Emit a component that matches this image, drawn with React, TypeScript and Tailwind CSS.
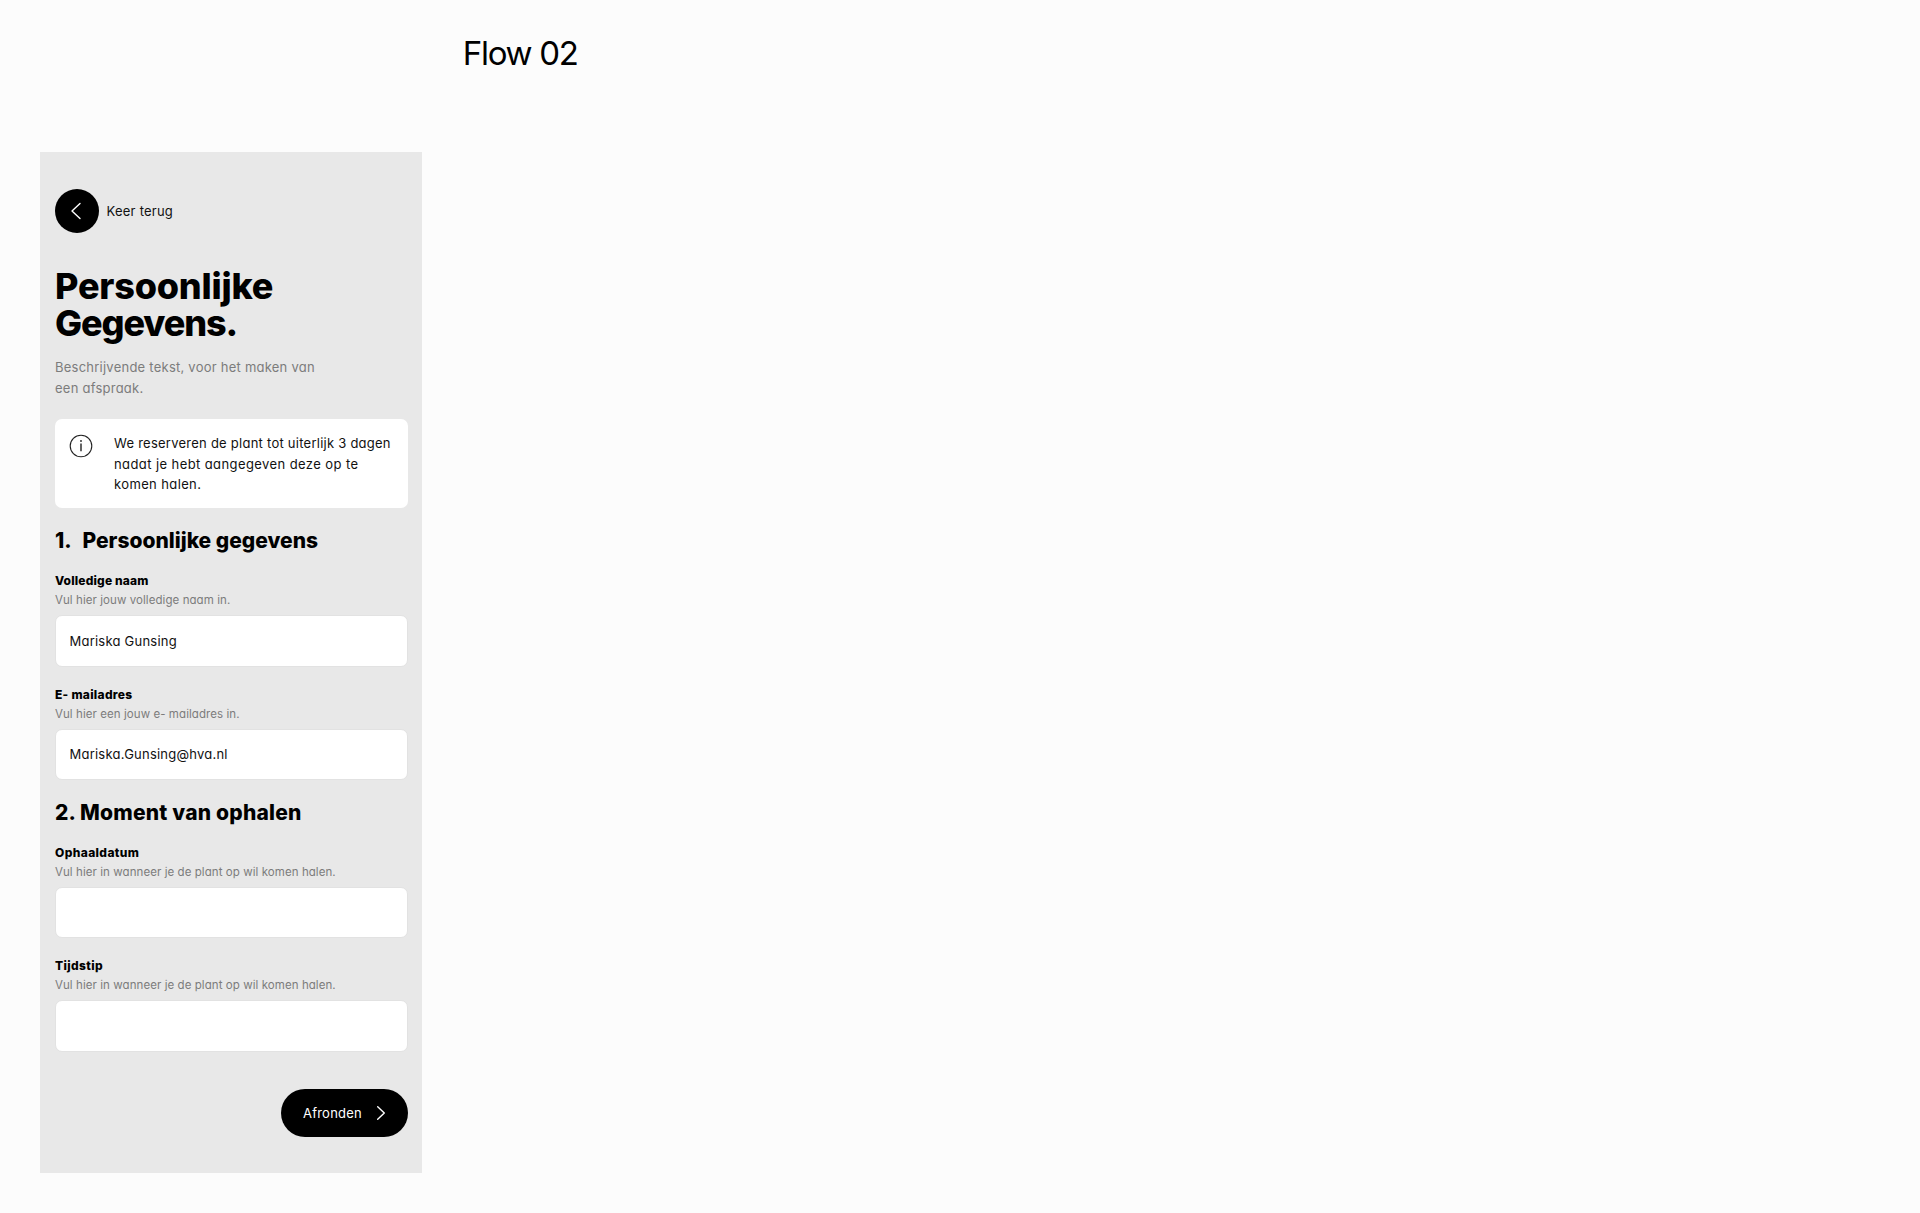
import type { ReactNode } from "react";

function Chevron({ className, points, box }: { className: string; points: string; box: string }) {
  return (
    <svg viewBox={box} className={className} fill="none" stroke="currentColor" strokeWidth="1.4" strokeLinecap="round" strokeLinejoin="round">
      <polyline points={points} />
    </svg>
  );
}

function SectionTitle({ children, className }: { children: ReactNode; className: string }) {
  return (
    <h2 className={`flex h-[28px] items-center whitespace-pre pt-[1.4px] text-[21px] leading-[28px] font-extrabold ${className}`}>
      {children}
    </h2>
  );
}

type FieldProps = { label: string; labelSpacing: string; hint: string; value?: string; className: string };

function Field({ label, labelSpacing, hint, value, className }: FieldProps) {
  return (
    <div className={className}>
      <div className={`h-[18px] text-[12px] leading-[18px] font-extrabold whitespace-nowrap ${labelSpacing}`}>{label}</div>
      <div className="mt-[2.3px] h-[17px] text-[11.5px] leading-[17px] tracking-[0.07px] whitespace-nowrap text-[#7c7c7c] [font-feature-settings:'cv11']">
        {hint}
      </div>
      <div className="mt-[6px] flex h-[51.5px] items-center rounded-[7px] border border-[#e2e2e2] bg-white pb-[1px] pl-[13.5px] text-[13px] leading-[20px] tracking-[0.23px] text-[#111] [font-feature-settings:'cv11']">
        {value}
      </div>
    </div>
  );
}

export default function App() {
  return (
    <div className="flex h-[1213px] w-[1920px] overflow-hidden bg-[#fcfcfc] pl-[40px] font-['Inter',sans-serif] text-black">
      <main className="mt-[152px] h-[1021px] w-[382.4px] shrink-0 bg-[#e8e8e8] pt-[37px] pr-[14.4px] pl-[15px]">
        <div className="flex h-[44px] items-center">
          <button className="flex size-[44px] items-center justify-center rounded-full bg-black pr-[3px] text-white">
            <Chevron className="h-[18px] w-[12px]" box="0 0 12 18" points="10,1.5 2,9 10,16.5" />
          </button>
          <span className="ml-[7.5px] text-[13px] leading-[20px] tracking-[0.24px] text-[#111] [font-feature-settings:'cv11']">Keer terug</span>
        </div>

        <h1 className="mt-[34.5px] text-[36px] leading-[37px] font-extrabold">
          <span className="block tracking-[-0.2px]">Persoonlijke</span>
          <span className="block tracking-[-1.1px]">Gegevens.</span>
        </h1>

        <p className="mt-[15.7px] h-[41.5px] text-[13px] leading-[20.75px] tracking-[0.24px] whitespace-nowrap text-[#7c7c7c] [font-feature-settings:'cv11']">
          Beschrijvende tekst, voor het maken van
          <br />
          een afspraak.
        </p>

        <section className="mt-[20.3px] flex h-[89.5px] rounded-[7px] bg-white pt-[14px] pl-[13.5px]">
          <svg viewBox="0 0 24 24" className="mt-[1.5px] size-[24px] shrink-0" fill="none" stroke="#222">
            <circle cx="12" cy="12" r="10.8" strokeWidth="1.1" />
            <path d="M12 9.6V17.2" strokeWidth="1.4" />
            <circle cx="12" cy="7" r="0.9" fill="#222" stroke="none" />
          </svg>
          <p className="ml-[21.5px] text-[13px] leading-[20.7px] whitespace-nowrap text-[#111] [font-feature-settings:'cv11']">
            <span className="block tracking-[0.25px]">We reserveren de plant tot uiterlijk 3 dagen</span>
            <span className="block tracking-[0.41px]">nadat je hebt aangegeven deze op te</span>
            <span className="block tracking-[0.38px]">komen halen.</span>
          </p>
        </section>

        <SectionTitle className="mt-[18.2px]">
          <span className="w-[27.5px]">1.</span>
          <span>Persoonlijke gegevens</span>
        </SectionTitle>
        <Field className="mt-[17.3px]" label="Volledige naam" labelSpacing="tracking-[0.16px]" hint="Vul hier jouw volledige naam in." value="Mariska Gunsing" />
        <Field className="mt-[18.8px]" label="E- mailadres" labelSpacing="tracking-[0.28px]" hint="Vul hier een jouw e- mailadres in." value="Mariska.Gunsing@hva.nl" />

        <SectionTitle className="mt-[18px] tracking-[0.2px]">2. Moment van ophalen</SectionTitle>
        <Field className="mt-[17.2px]" label="Ophaaldatum" labelSpacing="tracking-[0.38px]" hint="Vul hier in wanneer je de plant op wil komen halen." />
        <Field className="mt-[18.8px]" label="Tijdstip" labelSpacing="tracking-[0.35px]" hint="Vul hier in wanneer je de plant op wil komen halen." />

        <button className="mt-[36.8px] ml-auto flex h-[48px] w-[127px] items-center rounded-full bg-black pl-[22px] text-[13px] leading-[20px] tracking-[0.22px] text-white [font-feature-settings:'cv11']">
          <span className="w-[73px] text-left">Afronden</span>
          <Chevron className="h-[16px] w-[10px]" box="0 0 10 16" points="1.7,1.7 8.3,8 1.7,14.3" />
        </button>
      </main>

      <header className="mt-[33px] ml-[40.4px] h-[40px] text-[33px] leading-[40px] tracking-[-1.3px] whitespace-nowrap">Flow 02</header>
    </div>
  );
}
